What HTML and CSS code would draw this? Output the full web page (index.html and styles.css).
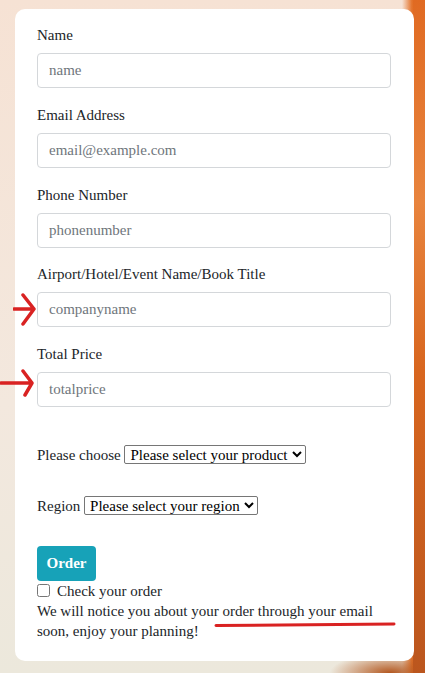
FILE: index.html
```html
<!DOCTYPE html>
<html lang="en">
<head>
<meta charset="utf-8">
<title>Order form</title>
<link rel="stylesheet" href="styles.css">
</head>
<body>
<div class="page">
  <form class="card">
    <div class="group">
      <label class="label">Name</label>
      <input class="control" type="text" placeholder="name">
    </div>
    <div class="group">
      <label class="label">Email Address</label>
      <input class="control" type="text" placeholder="email@example.com">
    </div>
    <div class="group">
      <label class="label">Phone Number</label>
      <input class="control" type="text" placeholder="phonenumber">
    </div>
    <div class="group">
      <label class="label">Airport/Hotel/Event Name/Book Title</label>
      <div class="field-wrap">
        <input class="control" type="text" placeholder="companyname">
        <svg class="arrow arrow-one" width="30" height="34" viewBox="0 0 30 34"><path d="M1 16 H21 M10 2 L21 16 L10 31" fill="none" stroke="#d92222" stroke-width="3.5" stroke-linecap="round" stroke-linejoin="round"/></svg>
      </div>
    </div>
    <div class="group">
      <label class="label">Total Price</label>
      <div class="field-wrap">
        <input class="control" type="text" placeholder="totalprice">
        <svg class="arrow arrow-two" width="40" height="34" viewBox="0 0 40 34"><path d="M1 16 H32 M23 4 L32 16 L25 28" fill="none" stroke="#d92222" stroke-width="3.5" stroke-linecap="round" stroke-linejoin="round"/></svg>
      </div>
    </div>
    <div class="row row-product">
      <span>Please choose&nbsp;</span>
      <select class="pick pick-product"><option>Please select your product</option></select>
    </div>
    <div class="row row-region">
      <span>Region&nbsp;</span>
      <select class="pick pick-region"><option>Please select your region</option></select>
    </div>
    <button class="order" type="button">Order</button>
    <div class="check-line">
      <input class="check" type="checkbox"><span>Check your order</span>
    </div>
    <div class="note">
      We will notice you about your order through your email soon, enjoy your planning!
      <svg class="underline" width="182" height="8" viewBox="0 0 182 8"><path d="M2 4.5 Q90 4 180 3" fill="none" stroke="#d92222" stroke-width="3" stroke-linecap="round"/></svg>
    </div>
  </form>
</div>
</body>
</html>
```
FILE: styles.css
```css
html, body {
  margin: 0;
  padding: 0;
}
body {
  width: 425px;
  height: 673px;
  overflow: hidden;
  font-family: "Liberation Serif", "Times New Roman", serif;
  font-size: 15px;
  color: #212529;
}
.page {
  height: 673px;
  box-sizing: border-box;
  padding: 9px 11px 12px 15px;
  background:
    radial-gradient(ellipse 60px 20px at 390px 673px, #b3571f 0%, rgba(179,87,31,0) 100%),
    linear-gradient(to right, rgba(0,0,0,0) 0, rgba(0,0,0,0) 402px, #e3722a 412px, #d4641f 425px),
    linear-gradient(to bottom, #f6e2d4 0, #f3e8de 60%, #ece8dc 100%);
  position: relative;
}
.page::after {
  content: "";
  position: absolute;
  right: 0;
  top: 0;
  width: 12px;
  height: 673px;
  background: linear-gradient(to bottom, #e06a22 0%, #e8843e 30%, #d8661f 55%, #bb561e 100%);
}
.card {
  position: relative;
  z-index: 1;
  height: 652px;
  box-sizing: border-box;
  background: #fff;
  border-radius: 10px;
  padding: 15px 23px 19px 22px;
  display: flex;
  flex-direction: column;
}
.group {
  display: flex;
  flex-direction: column;
  margin-bottom: 15.75px;
}
.label {
  display: block;
  height: 22px;
  line-height: 22px;
  margin-bottom: 7px;
}
.field-wrap {
  position: relative;
}
.control {
  display: block;
  width: 100%;
  height: 35px;
  box-sizing: border-box;
  border: 1px solid #d4d7da;
  border-radius: 4px;
  padding: 0 11px;
  font-family: "Liberation Serif", "Times New Roman", serif;
  font-size: 15px;
  color: #495057;
  background: #fff;
  outline: none;
}
.control::placeholder {
  color: #6f767c;
}
.arrow {
  position: absolute;
  pointer-events: none;
}
.arrow-one {
  left: -24px;
  top: 1px;
}
.arrow-two {
  left: -37px;
  top: -5px;
}
.row {
  display: flex;
  align-items: center;
  height: 20px;
  line-height: 20px;
}
.row-product {
  margin-top: 22px;
}
.row-region {
  margin-top: 31px;
}
.pick {
  font-family: "Liberation Serif", "Times New Roman", serif;
  font-size: 15px;
  color: #000;
  height: 19px;
  padding: 0 1px;
  border: 1px solid #767676;
  border-radius: 2px;
  background: #fff;
}
.order {
  align-self: flex-start;
  margin-top: 30px;
  height: 35px;
  padding: 0 9.5px;
  border: none;
  border-radius: 4px;
  background: #17a2b8;
  color: #fff;
  font-family: "Liberation Serif", "Times New Roman", serif;
  font-weight: bold;
  font-size: 15px;
}
.check-line {
  display: flex;
  align-items: center;
  height: 20px;
  line-height: 20px;
}
.check {
  width: 13px;
  height: 13px;
  margin: 0 7px 0 0;
}
.note {
  position: relative;
  line-height: 20px;
}
.underline {
  position: absolute;
  left: 177px;
  top: 20px;
  pointer-events: none;
}
```
